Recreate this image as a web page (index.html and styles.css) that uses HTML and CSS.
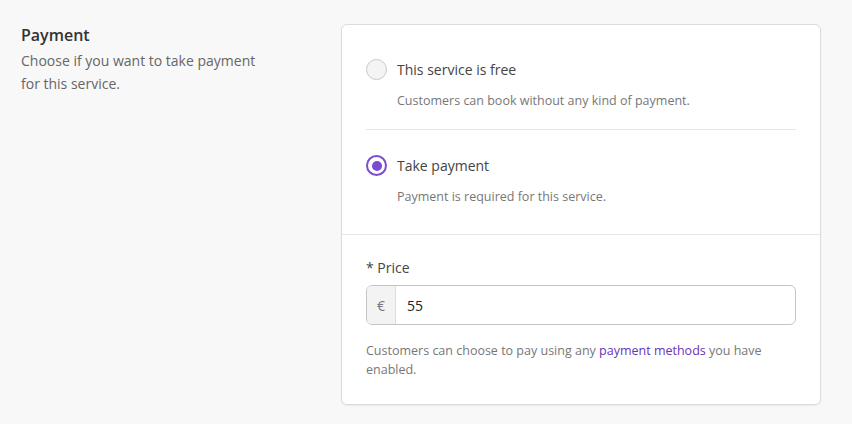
FILE: index.html
```html
<!DOCTYPE html>
<html>
<head>
<meta charset="utf-8">
<link rel="stylesheet" href="styles.css">
</head>
<body>
<div class="section">
  <div class="intro">
    <h2 class="intro-title">Payment</h2>
    <p class="intro-text">Choose if you want to take payment for this service.</p>
  </div>
  <div class="card">
    <div class="options">
      <div class="option">
        <div class="option-head">
          <span class="radio"></span>
          <span class="option-label">This service is free</span>
        </div>
        <p class="option-desc">Customers can book without any kind of payment.</p>
      </div>
      <div class="option option-last">
        <div class="option-head">
          <span class="radio radio-on"></span>
          <span class="option-label">Take payment</span>
        </div>
        <p class="option-desc">Payment is required for this service.</p>
      </div>
    </div>
    <div class="price">
      <label class="price-label">* Price</label>
      <div class="input">
        <span class="addon">€</span>
        <span class="input-value">55</span>
      </div>
      <p class="help">Customers can choose to pay using any <a class="link" href="#">payment methods</a> you have enabled.</p>
    </div>
  </div>
</div>
</body>
</html>
```
FILE: styles.css
```css
* { box-sizing: border-box; }
html, body { margin: 0; padding: 0; }
body {
  background: #f8f8f8;
  font-family: "Open Sans", "Noto Sans", sans-serif;
  color: #555;
  width: 852px;
  height: 424px;
  overflow: hidden;
}
.section {
  display: flex;
  padding: 24px 0 0 21px;
}
.intro { width: 320px; }
.intro-title {
  margin: 0;
  padding-top: 1px;
  font-size: 16px;
  font-weight: 600;
  line-height: 20px;
  color: #333;
}
.intro-text {
  margin: 4px 0 0;
  font-size: 14px;
  line-height: 23px;
  color: #666;
  width: 250px;
}
.card {
  width: 480px;
  height: 381px;
  background: #fff;
  border: 1px solid #dcdcdc;
  border-radius: 6px;
  box-shadow: 0 1px 2px rgba(0,0,0,0.06);
}
.options { padding: 0 24px; border-bottom: 1px solid #e6e6e6; }
.option { padding: 34px 0 19px; border-bottom: 1px solid #e6e6e6; }
.option-last { border-bottom: none; padding-top: 25px; padding-bottom: 28px; }
.option-head { display: flex; align-items: center; gap: 10px; height: 21px; }
.radio {
  width: 21px; height: 21px;
  border-radius: 50%;
  border: 1px solid #c8c8c8;
  background: #f4f4f4;
  flex: none;
  box-sizing: border-box;
}
.radio-on {
  border: 2px solid #7b4bd0;
  background: #fff;
  position: relative;
}
.radio-on::after {
  content: "";
  position: absolute;
  left: 3.5px; top: 3.5px;
  width: 10px; height: 10px;
  border-radius: 50%;
  background: #7b4bd0;
}
.option-label { font-size: 14px; color: #444; }
.option-desc {
  margin: 11px 0 0 31px;
  font-size: 12.5px;
  line-height: 19px;
  color: #777;
}
.price { padding: 23px 24px 0; }
.price-label { display: block; font-size: 14px; line-height: 20px; color: #444; }
.input {
  display: flex;
  margin-top: 7px;
  height: 40px;
  border: 1px solid #c4c4c4;
  border-radius: 6px;
  overflow: hidden;
}
.addon {
  width: 29px;
  background: #f3f3f3;
  border-right: 1px solid #dedede;
  display: flex; align-items: center; justify-content: center;
  font-size: 14px; color: #777;
}
.input-value {
  display: flex; align-items: center;
  padding-left: 11px;
  font-size: 14px; color: #222;
}
.help {
  margin: 16px 0 0;
  font-size: 12.5px;
  line-height: 19px;
  color: #777;
}
.link { color: #6633bb; text-decoration: none; }
```
